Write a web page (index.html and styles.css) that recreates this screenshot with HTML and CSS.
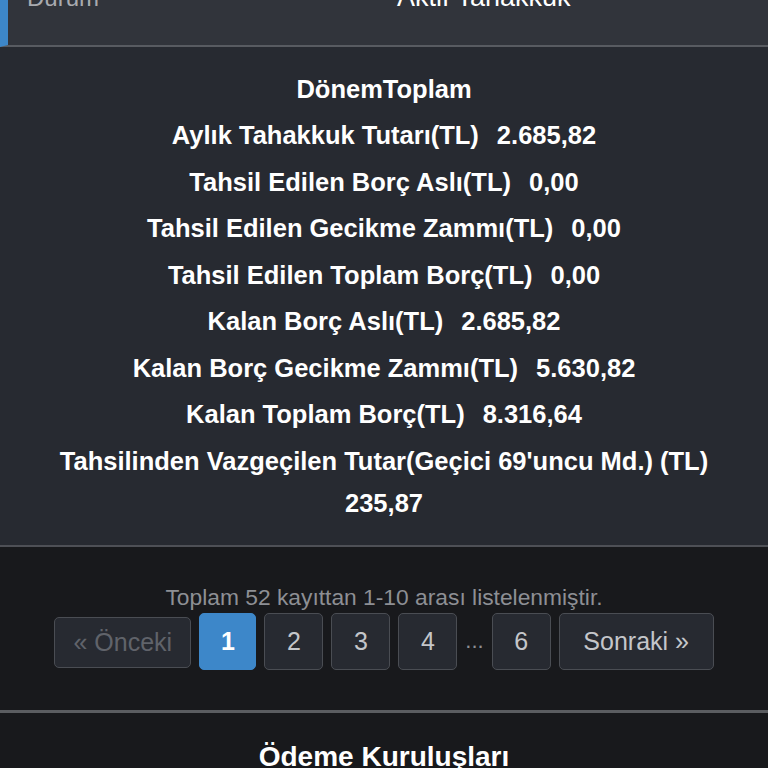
FILE: index.html
```html
<!DOCTYPE html>
<html lang="tr">
<head>
    <meta charset="UTF-8">
    <meta name="viewport" content="width=device-width, initial-scale=1.0">
    <title>Tahakkuk Detayı</title>
    <link rel="stylesheet" href="styles.css">
</head>
<body>
    <div id="page">
        <div class="detail-row">
            <div class="detail-label">Durum</div>
            <div class="detail-value">Aktif Tahakkuk</div>
        </div>

        <div class="summary">
            <div class="summary-title">DönemToplam</div>
            <div class="summary-line"><span>Aylık Tahakkuk Tutarı(TL)</span><span>2.685,82</span></div>
            <div class="summary-line"><span>Tahsil Edilen Borç Aslı(TL)</span><span>0,00</span></div>
            <div class="summary-line"><span>Tahsil Edilen Gecikme Zammı(TL)</span><span>0,00</span></div>
            <div class="summary-line"><span>Tahsil Edilen Toplam Borç(TL)</span><span>0,00</span></div>
            <div class="summary-line"><span>Kalan Borç Aslı(TL)</span><span>2.685,82</span></div>
            <div class="summary-line"><span>Kalan Borç Gecikme Zammı(TL)</span><span>5.630,82</span></div>
            <div class="summary-line"><span>Kalan Toplam Borç(TL)</span><span>8.316,64</span></div>
            <div class="summary-line wrap"><span>Tahsilinden Vazgeçilen Tutar(Geçici 69'uncu Md.) (TL)</span><span>235,87</span></div>
        </div>

        <div class="paging">
            <div class="paging-info">Toplam 52 kayıttan 1-10 arası listelenmiştir.</div>
            <div class="pager">
                <a class="page-btn prev disabled">« Önceki</a>
                <a class="page-btn active">1</a>
                <a class="page-btn">2</a>
                <a class="page-btn">3</a>
                <a class="page-btn">4</a>
                <span class="page-gap">...</span>
                <a class="page-btn">6</a>
                <a class="page-btn next">Sonraki »</a>
            </div>
        </div>

        <div class="section">
            <h2>Ödeme Kuruluşları</h2>
        </div>
    </div>
</body>
</html>
```

FILE: styles.css
```css
body {
    font-family: "Liberation Sans", Arial, sans-serif;
    background-color: #18191c;
    color: #fff;
    margin: 0;
}

#page {
    margin-top: -20px;
}

.detail-row {
    display: grid;
    grid-template-columns: 1fr 1fr;
    background-color: #31343b;
    border-left: 8px solid #3d87c9;
    border-bottom: 2px solid #585b61;
    height: 67px;
    box-sizing: border-box;
}

.detail-label {
    color: #a9abb0;
    font-size: 24px;
    padding: 4px 19px;
}

.detail-value {
    font-size: 27px;
    padding: 2px 9px;
}

.summary {
    background-color: #272a31;
    border-bottom: 2px solid #4e5056;
    padding: 19px 20px 21px;
    text-align: center;
    font-weight: bold;
    font-size: 25.5px;
}

.summary-title {
    line-height: 46px;
}

.summary-line {
    display: flex;
    justify-content: center;
    flex-wrap: wrap;
    column-gap: 18px;
    line-height: 46.5px;
}

.summary-line.wrap {
    flex-direction: column;
    line-height: 42px;
    margin-top: 2px;
}

.paging {
    padding: 37px 0 40px;
    border-bottom: 3px solid #5b5d61;
    text-align: center;
}

.paging-info {
    color: #8d8f94;
    font-size: 22.8px;
    line-height: 26px;
}

.pager {
    display: flex;
    justify-content: center;
    align-items: center;
    gap: 8px;
    margin-top: 3px;
}

.page-btn {
    display: block;
    width: 59px;
    height: 57px;
    line-height: 55px;
    box-sizing: border-box;
    border: 1px solid #4a4d53;
    border-radius: 5px;
    background-color: #272a31;
    color: #c4c6ca;
    font-size: 25px;
    white-space: nowrap;
}

.page-btn.prev {
    width: 137px;
}

.page-btn.next {
    width: 155px;
}

.page-btn.disabled {
    color: #60636a;
    height: 51px;
    line-height: 49px;
    margin-top: 3px;
}

.page-btn.active {
    width: 57px;
    background-color: #3d87c9;
    border-color: #3d87c9;
    color: #fff;
    font-weight: bold;
}

.page-gap {
    color: #8d8f94;
    font-size: 22px;
}

.section {
    text-align: center;
    padding-top: 28px;
}

.section h2 {
    margin: 0;
    font-size: 28px;
}
```
